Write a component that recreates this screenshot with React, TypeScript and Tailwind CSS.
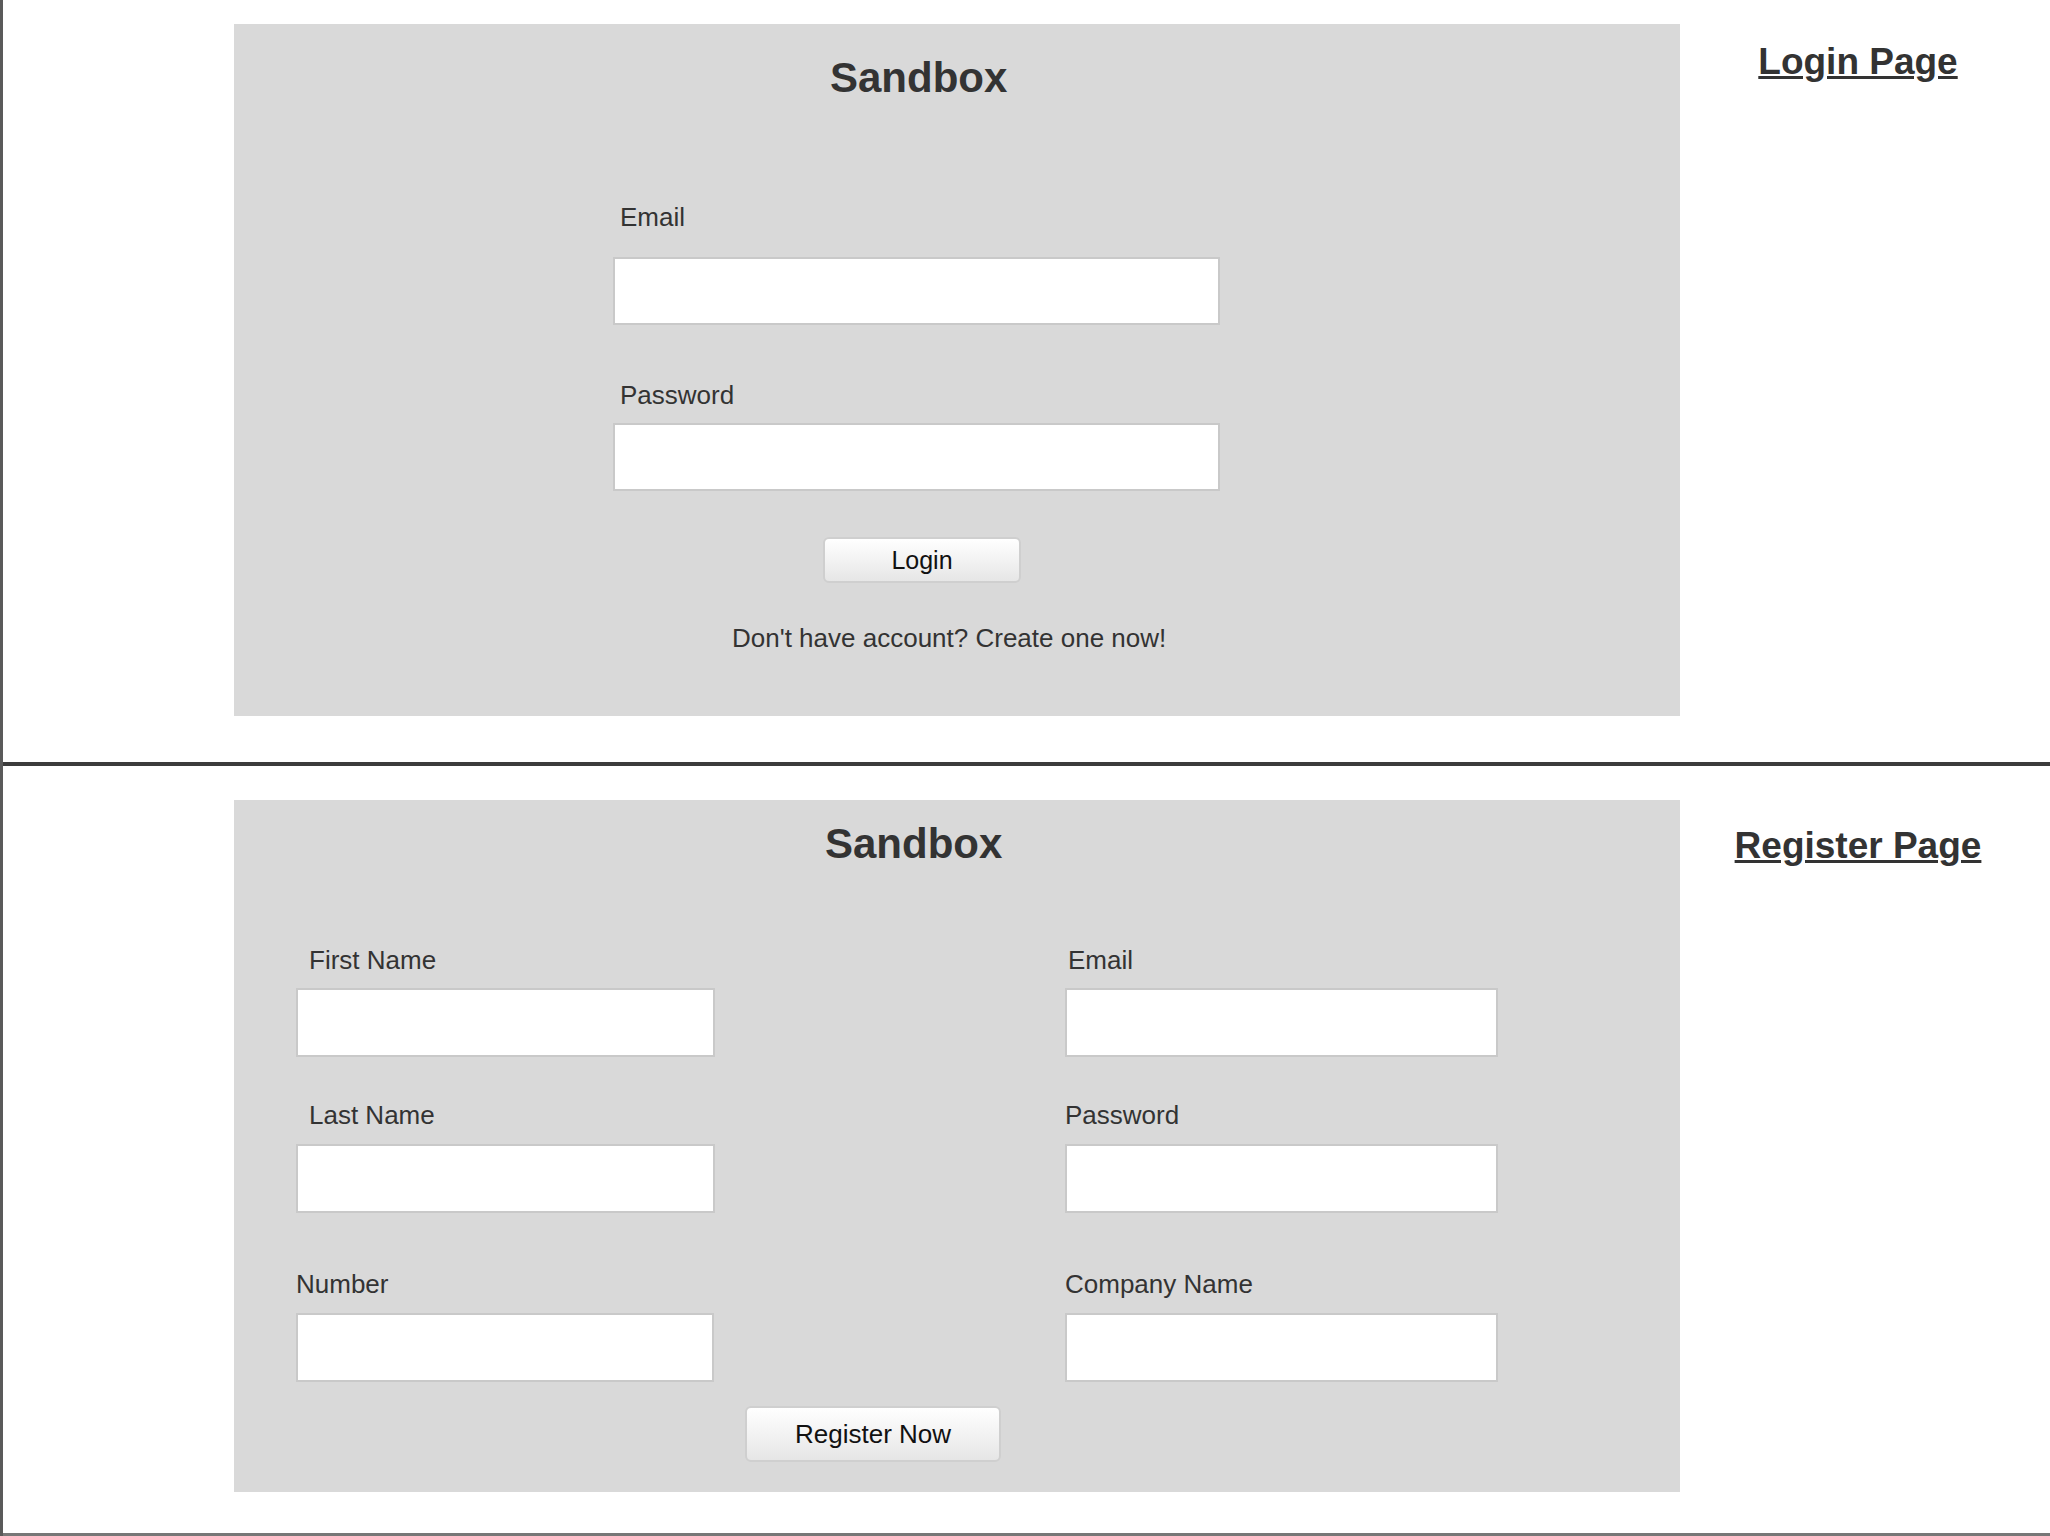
const panel = "w-[1446px] h-[692px] shrink-0 bg-[#d9d9d9] flex flex-col items-start";
const label = "block text-[26px] leading-none text-[#333]";
const field = "block bg-white border-2 border-[#c9c9c9] outline-none";
const button =
  "rounded-md border-2 border-[#cfcfcf] bg-linear-to-b from-white to-[#e6e6e6] leading-none text-[#111]";

function LoginPanel() {
  return (
    <div className={panel}>
      <h1 className="ml-[596px] mt-[33px] text-[42px] leading-none font-bold text-[#333]">Sandbox</h1>

      <label className={`${label} ml-[386px] mt-[105px]`}>Email</label>
      <input type="email" className={`${field} ml-[379px] mt-[27px] w-[607px] h-[68px]`} />

      <label className={`${label} ml-[386px] mt-[57px]`}>Password</label>
      <input type="password" className={`${field} ml-[379px] mt-[15px] w-[607px] h-[68px]`} />

      <button className={`${button} ml-[589px] mt-[46px] w-[198px] h-[46px] text-[25px]`}>Login</button>

      <p className="ml-[498px] mt-[42px] text-[26px] leading-none text-[#333]">
        Don't have account? Create one now!
      </p>
    </div>
  );
}

function Field({ name, indent = "", gap = "mt-[16px]", width = "w-[419px]" }: { name: string; indent?: string; gap?: string; width?: string }) {
  return (
    <>
      <label className={`${label} ${indent}`}>{name}</label>
      <input type="text" className={`${field} ${gap} h-[69px] ${width}`} />
    </>
  );
}

function RegisterPanel() {
  return (
    <div className={panel}>
      <h1 className="ml-[591px] mt-[23px] text-[42px] leading-none font-bold text-[#333]">Sandbox</h1>

      <div className="mt-[82px] ml-[62px] flex gap-[350px]">
        {/* left column */}
        <div className="flex flex-col items-start w-[419px]">
          <Field name="First Name" indent="ml-[13px]" gap="mt-[15px]" />
          <div className="mt-[45px]" />
          <Field name="Last Name" indent="ml-[13px]" />
          <div className="mt-[58px]" />
          <Field name="Number" width="w-[418px]" />
        </div>

        {/* right column */}
        <div className="flex flex-col items-start w-[433px]">
          <Field name="Email" indent="ml-[3px]" gap="mt-[15px]" width="w-[433px]" />
          <div className="mt-[45px]" />
          <Field name="Password" width="w-[433px]" />
          <div className="mt-[58px]" />
          <Field name="Company Name" width="w-[433px]" />
        </div>
      </div>

      <button className={`${button} ml-[511px] mt-[24px] w-[256px] h-[56px] text-[26px]`}>Register Now</button>
    </div>
  );
}

export default function App() {
  return (
    <div className="min-h-screen bg-white border-l-[3px] border-[#5a5a5a] font-['Liberation_Sans',Arial,sans-serif]">
      {/* Login section */}
      <section className="flex h-[766px] border-b-4 border-[#3c3c3c]">
        <div className="ml-[231px] mt-[24px]">
          <LoginPanel />
        </div>
        <div className="flex-1 pr-[14px] pt-[43px] text-center">
          <a href="#" className="text-[37px] leading-none font-bold text-[#333] underline decoration-[3px] underline-offset-[2px]">
            Login Page
          </a>
        </div>
      </section>

      {/* Register section */}
      <section className="flex h-[770px] border-b-[3px] border-[#777]">
        <div className="ml-[231px] mt-[34px]">
          <RegisterPanel />
        </div>
        <div className="flex-1 pr-[14px] pt-[61px] text-center">
          <a href="#" className="text-[37px] leading-none font-bold text-[#333] underline decoration-[3px] underline-offset-[2px]">
            Register Page
          </a>
        </div>
      </section>
    </div>
  );
}
